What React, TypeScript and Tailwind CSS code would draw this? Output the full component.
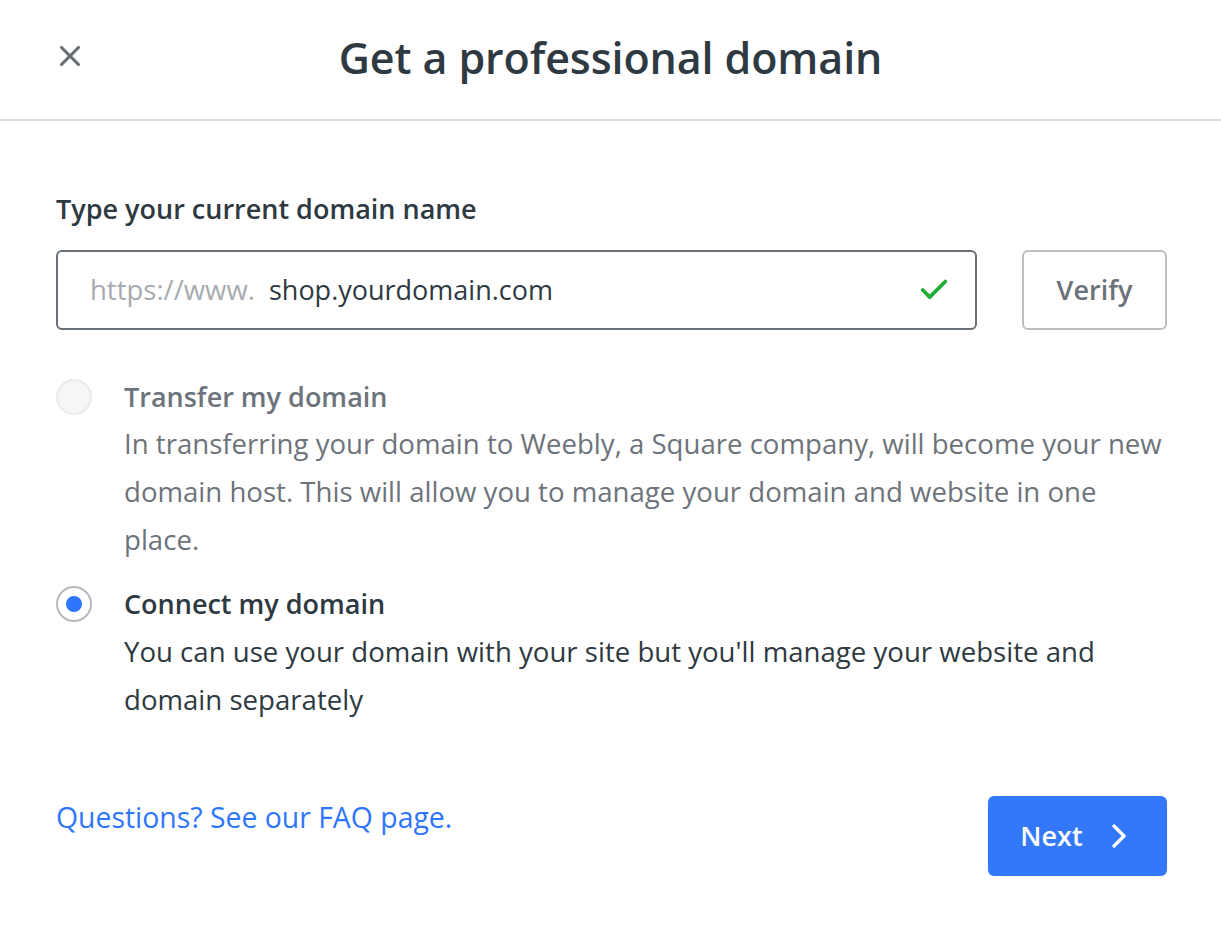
import { Check, ChevronRight, X } from "lucide-react";

export default function App() {
  return (
    <div className="min-h-screen w-full bg-white text-[#2e3941]" style={{ fontFamily: '"Open Sans", "Liberation Sans", sans-serif' }}>
      <header className="relative flex h-[121px] items-center justify-center border-b-2 border-[#dcdfe1]">
        <button className="absolute left-[52px] top-[38px] flex h-[36px] w-[36px] items-center justify-center text-[#676d73]">
          <X size={34} strokeWidth={2.2} />
        </button>
        <h1 className="pb-[4px] text-[43px] font-semibold leading-none tracking-[-0.1px]">Get a professional domain</h1>
      </header>

      <main className="pl-[56px] pr-[54px] pt-[72px]">
        <label className="block text-[27px] font-semibold leading-[32px]">Type your current domain name</label>

        <div className="mt-[25px] flex gap-[45px]">
          <div className="flex h-[80px] flex-1 items-center rounded-[6px] border-2 border-[#6b7178] pl-[32px] pr-[24px]">
            <span className="text-[27.5px] text-[#a6abb0]">https://www.</span>
            <span className="ml-[14px] text-[27px]">shop.yourdomain.com</span>
            <Check className="ml-auto text-[#1fae34]" size={34} strokeWidth={2.6} />
          </div>
          <button className="h-[80px] w-[145px] rounded-[6px] border-2 border-[#bcc0c4] text-[27px] font-semibold text-[#6b7178]">
            Verify
          </button>
        </div>

        <div className="mt-[48px] flex gap-[32px]">
          <div className="mt-[1px] h-[36px] w-[36px] shrink-0 rounded-full border-2 border-[#e9ebed] bg-[#f4f6f7]" />
          <div className="text-[#6d737a]">
            <div className="text-[27px] font-semibold leading-[38px]">Transfer my domain</div>
            <p className="mt-[3px] text-[27.6px] leading-[48px]">
              In transferring your domain to Weebly, a Square company, will become your new domain host. This will allow you to manage your domain and website in one place.
            </p>
          </div>
        </div>

        <div className="mt-[22px] flex gap-[32px]">
          <div className="mt-[1px] flex h-[36px] w-[36px] shrink-0 items-center justify-center rounded-full border-2 border-[#b6babe] bg-white">
            <div className="h-[16px] w-[16px] rounded-full bg-[#2f76ff]" />
          </div>
          <div>
            <div className="text-[27px] font-semibold leading-[38px]">Connect my domain</div>
            <p className="mt-[4px] text-[27.6px] leading-[48px]">
              You can use your domain with your site but you'll manage your website and domain separately
            </p>
          </div>
        </div>

        <div className="mt-[73px] flex items-start justify-between">
          <a href="#" className="text-[28.4px] text-[#2f76ff]">Questions? See our FAQ page.</a>
          <button className="flex h-[80px] w-[179px] items-center justify-center gap-[16px] rounded-[6px] bg-[#3478fa] text-[27px] font-semibold text-white">
            Next
            <ChevronRight size={40} strokeWidth={2} className="-mr-[4px]" />
          </button>
        </div>
      </main>
    </div>
  );
}
